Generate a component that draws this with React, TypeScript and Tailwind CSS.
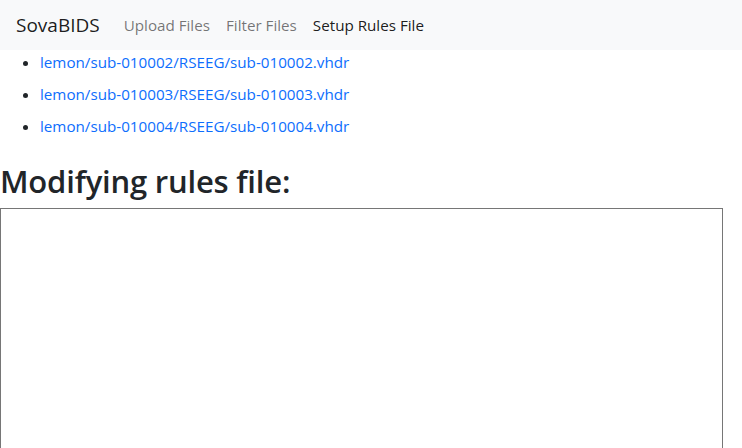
const files = [
  "lemon/sub-010002/RSEEG/sub-010002.vhdr",
  "lemon/sub-010003/RSEEG/sub-010003.vhdr",
  "lemon/sub-010004/RSEEG/sub-010004.vhdr",
];

export default function App() {
  return (
    <div className="min-h-screen bg-white text-[#212529] font-['Open_Sans',sans-serif]">
      {/* Navbar */}
      <nav className="h-[50px] bg-[#f8f9fa] flex items-center px-4">
        <span className="text-[19px] mr-4 text-black/90">SovaBIDS</span>
        <div className="flex text-[15.2px]">
          <a className="px-2 text-black/55">Upload Files</a>
          <a className="px-2 text-black/55">Filter Files</a>
          <a className="px-2 text-black/90">Setup Rules File</a>
        </div>
      </nav>

      {/* File list */}
      <ul className="list-disc pl-10 mb-4">
        {files.map((f) => (
          <li key={f} className="mb-2 leading-6 text-[15.2px]">
            <a className="text-[#0d6efd]">{f}</a>
          </li>
        ))}
      </ul>

      <h1 className="pt-[9px] text-[31px] font-semibold tracking-[-0.2px] leading-[1.2] mb-2">
        Modifying rules file:
      </h1>

      <textarea className="block w-[723px] h-[260px] border border-[#767676] resize-none" />
    </div>
  );
}
